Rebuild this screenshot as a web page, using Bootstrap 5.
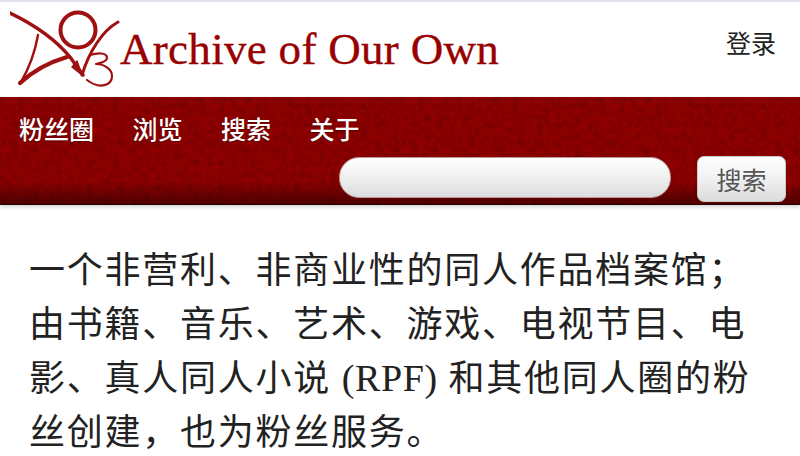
<!DOCTYPE html>
<html lang="zh">
<head>
<meta charset="utf-8">
<title>Archive of Our Own</title>
<link href="https://cdn.jsdelivr.net/npm/bootstrap@5.3.0/dist/css/bootstrap.min.css" rel="stylesheet">
<style>
html,body{height:456px;overflow:hidden;background:#fff}
body{font-family:"Liberation Serif","Noto Sans CJK SC",serif;border-top:2px solid #dfe0ea}
.ao-head{height:95px;padding:0 24px 0 10px}
.ao-logo{width:110px;height:80px;flex:none;filter:blur(.35px)}
.ao-title{font-family:"Liberation Serif",serif;font-size:45px;color:#900;line-height:1;margin:0;font-weight:400;letter-spacing:.3px;-webkit-text-stroke:.35px #900}
.ao-login{font-family:"Noto Sans CJK SC",sans-serif;font-size:25px;color:#222;text-decoration:none;line-height:1;margin-top:-15px}
.ao-bar{height:108px;position:relative;background-color:#8d0000;
background-image:linear-gradient(to bottom,rgba(0,0,0,0) 78%,rgba(0,0,0,.42) 99%,#000 100%),url("data:image/svg+xml,%3Csvg xmlns='http://www.w3.org/2000/svg' width='400' height='108'%3E%3Cfilter id='n'%3E%3CfeTurbulence type='fractalNoise' baseFrequency='.16' numOctaves='3' seed='4'/%3E%3CfeColorMatrix values='0 0 0 0 0 0 0 0 0 0 0 0 0 0 0 .4 0 0 0 -.16'/%3E%3C/filter%3E%3Crect width='400' height='108' filter='url(%23n)'/%3E%3C/svg%3E");
box-shadow:0 2px 4px rgba(0,0,0,.18);padding:14px 14px 0 19px}
.ao-nav{gap:38.5px;height:37px}
.ao-nav a{font-family:"Noto Sans CJK SC",sans-serif;font-size:25px;line-height:34px;color:#fff;text-decoration:none;font-weight:500;text-shadow:0 1px 1px rgba(0,0,0,.35)}
.ao-search{gap:26px;margin-top:9px}
.ao-input{width:332px;height:41px;border-radius:20px;border:1px solid #b99;background:linear-gradient(#fff,#f6f6f6 30%,#dcdcdc);padding:0 16px}
.ao-btn{width:89px;height:46px;margin-top:-1px;border-radius:7px;border:1px solid #ccc;background:linear-gradient(#fff 0,#f4f4f4 40%,#dcdcdc);font-family:"Noto Sans CJK SC",sans-serif;font-size:25px;color:#555;line-height:1;padding:0}
.ao-intro{font-family:"Liberation Serif","Noto Sans CJK SC",serif;font-size:36px;letter-spacing:1.75px;line-height:53.5px;color:#222;padding:40px 20px 0 29px;margin:0;font-weight:400;white-space:nowrap}
.ao-rpf{font-size:38px;letter-spacing:.6px}
</style>
</head>
<body>
<header class="ao-head d-flex align-items-center justify-content-between">
  <a class="d-flex align-items-center text-decoration-none" href="#">
    <svg class="ao-logo" viewBox="10 10 110 80" fill="none" stroke="#a01010" stroke-linecap="round" stroke-linejoin="round">
      <path d="M10 13C33 24 56 40 70 57L83 75" stroke-width="3.4"/>
      <path d="M38 35C35 52 28 70 21 82" stroke-width="2.4"/>
      <path d="M20 83C34 70 50 62 67 57" stroke-width="4.2"/>
      <path d="M77 61L82 75L72 67Z" fill="#a01010" stroke-width="1.5"/>
      <ellipse cx="78" cy="30" rx="17.5" ry="17.5" stroke-width="4"/>
      <path d="M118 22C102 31 89 52 82 75" stroke-width="3"/>
      <path d="M90 55C97 53 107 52 107 58C107 62 100 63 96 64C104 64 112 69 112 76C112 85 100 90 87 80" stroke-width="2.2"/>
    </svg>
    <h1 class="ao-title">Archive of Our Own</h1>
  </a>
  <a class="ao-login" href="#">登录</a>
</header>
<nav class="ao-bar">
  <div class="ao-nav d-flex">
    <a href="#">粉丝圈</a>
    <a href="#">浏览</a>
    <a href="#">搜索</a>
    <a href="#">关于</a>
  </div>
  <form class="ao-search d-flex justify-content-end align-items-start" onsubmit="return false">
    <input class="ao-input" type="text" aria-label="搜索">
    <button class="ao-btn btn" type="submit">搜索</button>
  </form>
</nav>
<p class="ao-intro">一个非营利、非商业性的同人作品档案馆；<br>由书籍、音乐、艺术、游戏、电视节目、电<br>影、真人同人小说 <span class="ao-rpf">(RPF)</span> 和其他同人圈的粉<br>丝创建，也为粉丝服务。</p>
</body>
</html>
